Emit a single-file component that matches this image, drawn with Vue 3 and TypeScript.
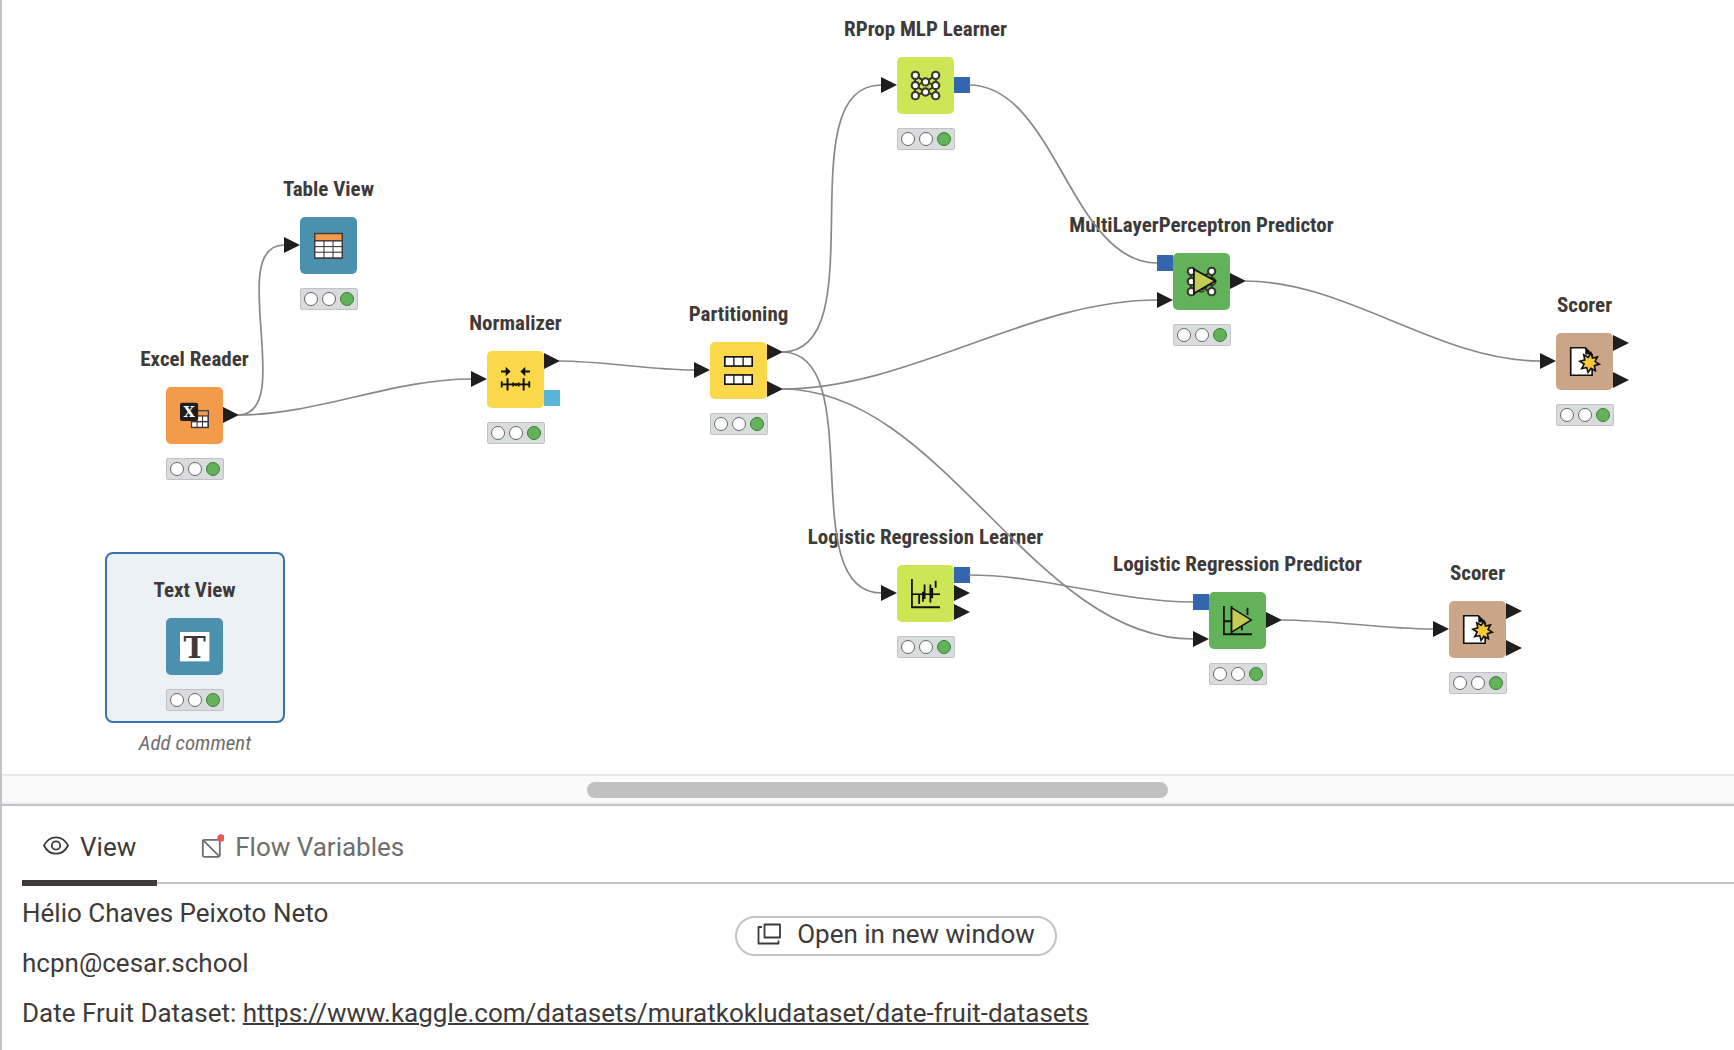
<script setup lang="ts">
import { ref } from 'vue'

type PortKind = 'data' | 'model' | 'prep'
type IconName =
  | 'excel' | 'table' | 'text' | 'normalizer' | 'partition'
  | 'network' | 'networkPredictor' | 'scorer' | 'regression' | 'regressionPredictor'

interface Port { y: number; kind: PortKind }
interface WorkflowNode {
  id: string
  label: string
  x: number
  y: number
  color: string
  icon: IconName
  inputs: Port[]
  outputs: Port[]
}
interface Connection { from: string; out: number; to: string; in: number }

const TILE = 57
const PORT = 16
const LABEL = 40

const orange = '#f39b4a'
const blue = '#4b91ae'
const yellow = '#fad84a'
const lime = '#cde656'
const green = '#61b259'
const tan = '#cba588'

// Port heights on a tile
const top = 10
const mid = 28
const low = 47

const nodes: WorkflowNode[] = [
  { id: 'excel', label: 'Excel Reader', x: 166, y: 387, color: orange, icon: 'excel', inputs: [], outputs: [{ y: mid, kind: 'data' }] },
  { id: 'table', label: 'Table View', x: 300, y: 217, color: blue, icon: 'table', inputs: [{ y: mid, kind: 'data' }], outputs: [] },
  { id: 'norm', label: 'Normalizer', x: 487, y: 351, color: yellow, icon: 'normalizer', inputs: [{ y: mid, kind: 'data' }], outputs: [{ y: top, kind: 'data' }, { y: low, kind: 'prep' }] },
  { id: 'part', label: 'Partitioning', x: 710, y: 342, color: yellow, icon: 'partition', inputs: [{ y: mid, kind: 'data' }], outputs: [{ y: top, kind: 'data' }, { y: low, kind: 'data' }] },
  { id: 'rprop', label: 'RProp MLP Learner', x: 897, y: 57, color: lime, icon: 'network', inputs: [{ y: mid, kind: 'data' }], outputs: [{ y: mid, kind: 'model' }] },
  { id: 'mlp', label: 'MultiLayerPerceptron Predictor', x: 1173, y: 253, color: green, icon: 'networkPredictor', inputs: [{ y: top, kind: 'model' }, { y: low, kind: 'data' }], outputs: [{ y: mid, kind: 'data' }] },
  { id: 'scorer1', label: 'Scorer', x: 1556, y: 333, color: tan, icon: 'scorer', inputs: [{ y: mid, kind: 'data' }], outputs: [{ y: top, kind: 'data' }, { y: low, kind: 'data' }] },
  { id: 'logl', label: 'Logistic Regression Learner', x: 897, y: 565, color: lime, icon: 'regression', inputs: [{ y: mid, kind: 'data' }], outputs: [{ y: top, kind: 'model' }, { y: mid, kind: 'data' }, { y: low, kind: 'data' }] },
  { id: 'logp', label: 'Logistic Regression Predictor', x: 1209, y: 592, color: green, icon: 'regressionPredictor', inputs: [{ y: top, kind: 'model' }, { y: low, kind: 'data' }], outputs: [{ y: mid, kind: 'data' }] },
  { id: 'scorer2', label: 'Scorer', x: 1449, y: 601, color: tan, icon: 'scorer', inputs: [{ y: mid, kind: 'data' }], outputs: [{ y: top, kind: 'data' }, { y: low, kind: 'data' }] },
  { id: 'text', label: 'Text View', x: 166, y: 618, color: blue, icon: 'text', inputs: [], outputs: [] }
]

const connections: Connection[] = [
  { from: 'excel', out: 0, to: 'table', in: 0 },
  { from: 'excel', out: 0, to: 'norm', in: 0 },
  { from: 'norm', out: 0, to: 'part', in: 0 },
  { from: 'part', out: 0, to: 'rprop', in: 0 },
  { from: 'part', out: 0, to: 'logl', in: 0 },
  { from: 'part', out: 1, to: 'mlp', in: 1 },
  { from: 'part', out: 1, to: 'logp', in: 1 },
  { from: 'rprop', out: 0, to: 'mlp', in: 0 },
  { from: 'mlp', out: 0, to: 'scorer1', in: 0 },
  { from: 'logl', out: 0, to: 'logp', in: 0 },
  { from: 'logp', out: 0, to: 'scorer2', in: 0 }
]

const byId = new Map(nodes.map((n) => [n.id, n]))

// Horizontal handles, each a third of the distance between the two ports
function connectionPath(c: Connection): string {
  const a = byId.get(c.from)!
  const b = byId.get(c.to)!
  const x1 = a.x + TILE + PORT - 1
  const y1 = a.y + a.outputs[c.out].y
  const x2 = b.x - PORT
  const y2 = b.y + b.inputs[c.in].y
  const bend = Math.round(Math.hypot(x2 - x1, y2 - y1) / 3)
  return `M${x1},${y1} C${x1 + bend},${y1} ${x2 - bend},${y2} ${x2},${y2}`
}

const paths = connections.map(connectionPath)

function triangle(x: number, y: number): string {
  return `${x},${y - 8} ${x + 16},${y} ${x},${y + 8}`
}

const portColor: Record<PortKind, string> = { data: '#1e1e1e', model: '#3366ac', prep: '#5ab4d8' }

const starPoints = Array.from({ length: 16 }, (_, i) => {
  const r = i % 2 === 0 ? 5.4 : 3.1
  const a = (i * Math.PI) / 8 + 0.15
  return `${(10.8 + r * Math.cos(a)).toFixed(2)},${(8.7 + r * Math.sin(a)).toFixed(2)}`
}).join(' ')

const activeTab = ref<'view' | 'variables'>('view')
</script>

<template>
  <main class="workspace">
    <section class="canvas" aria-label="Workflow">
      <div class="selection">
        <span class="add-comment">Add comment</span>
      </div>

      <div
        v-for="n in nodes"
        :key="n.id"
        class="node"
        :style="{ left: n.x + 'px', top: n.y - LABEL + 'px' }"
      >
        <span class="label">{{ n.label }}</span>
        <svg class="tile" viewBox="0 0 57 57" aria-hidden="true">
          <rect width="57" height="57" rx="5" :fill="n.color" />
          <template v-for="(p, i) in n.inputs" :key="'i' + i">
            <polygon v-if="p.kind === 'data'" :points="triangle(-16, p.y)" :fill="portColor.data" />
            <rect v-else x="-16" :y="p.y - 8" width="16" height="16" :fill="portColor[p.kind]" />
          </template>
          <template v-for="(p, i) in n.outputs" :key="'o' + i">
            <polygon v-if="p.kind === 'data'" :points="triangle(57, p.y)" :fill="portColor.data" />
            <rect v-else x="57" :y="p.y - 8" width="16" height="16" :fill="portColor[p.kind]" />
          </template>

          <svg x="14" y="14" width="29" height="29" viewBox="0 0 16 16" overflow="visible">
            <g v-if="n.icon === 'excel'">
              <rect x="6" y="5" width="10" height="10" fill="#3e3a39" />
              <rect x="6.7" y="5.7" width="8.6" height="2.2" fill="#f39b4a" />
              <g fill="#fff">
                <rect v-for="k in 6" :key="k" :x="6.7 + ((k - 1) % 3) * 3" :y="k < 4 ? 8.6 : 11.8" width="2.4" height="2.4" />
              </g>
              <rect x="0" y="1" width="10" height="10" rx="1.2" fill="#1e1e1e" />
              <text x="5" y="8.9" text-anchor="middle" font-family="DejaVu Serif, serif" font-weight="700" font-size="8" fill="#fff">X</text>
            </g>

            <g v-else-if="n.icon === 'table'">
              <rect x="0" y="1" width="16" height="14.4" fill="#3e3a39" />
              <rect x="0.8" y="1.8" width="14.4" height="3.2" fill="#f39b4a" />
              <g fill="#fff">
                <rect v-for="k in 9" :key="k" :x="0.8 + ((k - 1) % 3) * 5" :y="5.8 + Math.floor((k - 1) / 3) * 3.1" width="4.4" height="2.5" />
              </g>
            </g>

            <g v-else-if="n.icon === 'text'">
              <rect width="16.2" height="16.2" fill="#fff" />
              <text x="8.1" y="14.2" text-anchor="middle" font-family="DejaVu Serif, serif" font-weight="700" font-size="16.5" fill="#3e3a39">T</text>
            </g>

            <g v-else-if="n.icon === 'normalizer'" fill="none" stroke="#111">
              <path d="M0 3.6h3M16 3.6h-3" stroke-width="1" />
              <path d="M2.6 1v5.2l2.7-2.6zM13.4 1v5.2l-2.7-2.6z" fill="#111" stroke="none" />
              <path d="M0 10.7h16" stroke-width="1" />
              <path d="M.4 9v3.4M15.6 9v3.4M6.7 9.6v2.2M8.2 10v1.6M9.7 9.6v2.2" stroke-width="1" />
              <path d="M3.6 7.3v6.7M12.5 7.3v6.7" stroke-width="1.1" />
            </g>

            <g v-else-if="n.icon === 'partition'">
              <template v-for="r in [0, 10]" :key="r">
                <rect x="0" :y="r" width="16" height="6" fill="#111" />
                <rect x="0.9" :y="r + 0.9" width="4.2" height="4.2" fill="#fff" />
                <rect x="5.8" :y="r + 0.9" width="4.4" height="4.2" fill="#fff" />
                <rect x="10.9" :y="r + 0.9" width="4.2" height="4.2" fill="#fff" />
              </template>
            </g>

            <g v-else-if="n.icon === 'network' || n.icon === 'networkPredictor'">
              <path d="M2.2 2.4L8 6l5.7-3.6M2.2 8L8 6l5.7 2M2.2 8L8 11.6 13.7 8M2.2 13.6L8 11.6l5.7 2M2.2 2.4v11.2M13.7 2.4v11.2" stroke="#2b2b20" stroke-width="1" fill="none" />
              <g fill="#fff" stroke="#3a3830" stroke-width="1.2">
                <circle v-for="k in 3" :key="'l' + k" cx="2.4" :cy="2.4 + (k - 1) * 5.6" r="2" />
                <circle v-for="k in 3" :key="'r' + k" cx="13.6" :cy="2.4 + (k - 1) * 5.6" r="2" />
                <circle cx="8" cy="6" r="2" />
                <circle cx="8" cy="11.6" r="2" />
              </g>
              <g v-if="n.icon === 'networkPredictor'">
                <path d="M6 6h4v7H6z" fill="#61b259" />
                <path d="M8 12.600l3-1.600" stroke="#2b2b20" stroke-width="1" />
                <path d="M3.800 1.200L15.600 7.700 3.800 14.600z" fill="#c3cd54" stroke="#111" stroke-width="1" />
              </g>
            </g>

            <g v-else-if="n.icon === 'scorer'">
              <path d="M.4.4h8l3.8 3.8v11.4H.4z" fill="#fff" stroke="#111" stroke-width="0.9" />
              <path d="M8.4.2v4h4z" fill="#111" />
              <polygon :points="starPoints" fill="#f7c83c" stroke="#111" stroke-width="0.9" />
            </g>

            <g v-else-if="n.icon === 'regression'" fill="none" stroke="#111">
              <path d="M.5 0v15.6H16" stroke-width="1" />
              <path d="M.5 8.4H16" stroke-width="0.9" />
              <path d="M4.5 8.4v5.4M6.6 7v5.6M7.5 3v8M10.7 3v10M11.7 5v5.6M13.6 1v3.8" stroke-width="1" />
            </g>

            <g v-else>
              <path d="M.5 0v15.6H16M.5 8.4h4.2M13.5 1v4M10.4 11v2.4M4.7 0v15" fill="none" stroke="#111" stroke-width="1" />
              <path d="M4.8 1L15.6 7.7 4.8 14.4z" fill="#c3cd54" stroke="#111" stroke-width="0.8" />
            </g>
          </svg>
        </svg>
        <span class="status" role="img" aria-label="Executed">
          <i class="lamp"></i><i class="lamp"></i><i class="lamp on"></i>
        </span>
      </div>

      <svg class="connections" aria-hidden="true">
        <path v-for="(d, i) in paths" :key="i" :d="d" />
      </svg>
    </section>

    <div class="scroll-track"><div class="scroll-thumb"></div></div>

    <section class="panel">
      <div class="tabs" role="tablist">
        <button type="button" role="tab" class="tab" :class="{ active: activeTab === 'view' }" :aria-selected="activeTab === 'view'" @click="activeTab = 'view'">
          <svg class="tab-icon" viewBox="0 0 26 26" fill="none" stroke="currentColor" stroke-width="1.8" aria-hidden="true">
            <path d="M1 11.5C3.6 6.2 8 3.3 13 3.3s9.4 2.9 12 8.2c-2.6 5.3-7 8.2-12 8.2S3.600 16.800 1 11.500z" stroke-linejoin="round" />
            <circle cx="13" cy="11.5" r="4.2" />
          </svg>
          <span>View</span>
        </button>
        <button type="button" role="tab" class="tab" :class="{ active: activeTab === 'variables' }" :aria-selected="activeTab === 'variables'" @click="activeTab = 'variables'">
          <svg class="tab-icon" viewBox="0 0 26 26" fill="none" stroke="currentColor" stroke-width="1.8" aria-hidden="true">
            <rect x="4.8" y="5.8" width="17" height="17" rx="1.5" />
            <path d="M5.3 6.3l16 16" />
            <circle cx="23" cy="4" r="3.7" fill="#ed5a55" stroke="none" />
          </svg>
          <span>Flow Variables</span>
        </button>
      </div>

      <div class="view">
        <div class="text-content">
          <p>Hélio Chaves Peixoto Neto</p>
          <p>hcpn@cesar.school</p>
          <p>Date Fruit Dataset: <a href="https://www.kaggle.com/datasets/muratkokludataset/date-fruit-datasets">https://www.kaggle.com/datasets/muratkokludataset/date-fruit-datasets</a></p>
        </div>
        <button type="button" class="open-button">
          <svg width="24" height="22" viewBox="0 0 24 22" fill="none" stroke="currentColor" stroke-width="1.8" stroke-linejoin="round" aria-hidden="true">
            <rect x="7.5" y="1.5" width="15.500" height="13" />
            <path d="M5 4H1.5v16.500H21.500V17.500" />
          </svg>
          <span>Open in new window</span>
        </button>
      </div>
    </section>
  </main>
</template>

<style>
body {
  margin: 0;
  background: #fff;
}
</style>

<style scoped>
.workspace {
  box-sizing: border-box;
  display: flex;
  flex-direction: column;
  min-height: 100vh;
  border-left: 2px solid #bfc4c9;
  background: #fff;
  color: #3e3a39;
  font-family: Roboto, "Liberation Sans", sans-serif;
  overflow: hidden;
}
.canvas {
  position: relative;
  flex: 1;
  min-height: 760px;
  margin-left: -2px;
  font-family: "Roboto Condensed", "Liberation Sans Narrow", Roboto, sans-serif;
  font-size: 21px;
  line-height: 24px;
}
.connections {
  position: absolute;
  inset: 0;
  width: 100%;
  height: 100%;
  fill: none;
  stroke: #888;
  stroke-width: 1.7;
  pointer-events: none;
}
.node {
  position: absolute;
  display: flex;
  flex-direction: column;
  align-items: center;
  width: 57px;
}
.label {
  margin-bottom: 16px;
  font-weight: 700;
  white-space: nowrap;
}
.tile {
  display: block;
  width: 57px;
  height: 57px;
  overflow: visible;
}
.status {
  box-sizing: border-box;
  display: flex;
  align-items: center;
  justify-content: center;
  gap: 4px;
  width: 58px;
  height: 22px;
  margin-top: 14px;
  border: 1px solid #c0c3c5;
  border-radius: 2px;
  background: #d8dcdd;
}
.lamp {
  box-sizing: border-box;
  width: 14px;
  height: 14px;
  border: 1px solid #666;
  border-radius: 50%;
  background: #fff;
}
.lamp.on {
  border-color: #3c7d37;
  background: #61b259;
}
.selection {
  position: absolute;
  left: 105px;
  top: 552px;
  box-sizing: border-box;
  display: flex;
  justify-content: center;
  width: 180px;
  height: 171px;
  border: 2px solid #3b72ae;
  border-radius: 8px;
  background: #ecf1f6;
}
.add-comment {
  margin-top: 177px;
  height: 24px;
  color: #6e6e6e;
  font-style: italic;
  white-space: nowrap;
}
.scroll-track {
  box-sizing: border-box;
  height: 30px;
  padding: 6px 0;
  border-top: 2px solid #e8e8e8;
  border-bottom: 2px solid #ededed;
  background: #fafafa;
}
.scroll-thumb {
  width: 33.5%;
  height: 16px;
  margin-left: 33.8%;
  border-radius: 8px;
  background: #c1c1c1;
}
.panel {
  display: flex;
  flex-direction: column;
  height: 244px;
  padding-left: 20px;
  border-top: 2px solid #bfc4c9;
  font-size: 26px;
}
.tabs {
  display: flex;
  gap: 20px;
  height: 76px;
  border-bottom: 2px solid #bfc4c9;
}
.tab {
  box-sizing: border-box;
  display: flex;
  align-items: center;
  gap: 11px;
  height: 80px;
  padding: 7px 21px 0;
  border: 0;
  border-bottom: 6px solid transparent;
  background: none;
  color: #6e6e6e;
  font: inherit;
  line-height: 30px;
}
.tab.active {
  border-bottom-color: #3e3a39;
  color: #3e3a39;
}
.tab-icon {
  width: 26px;
  height: 26px;
}
.view {
  display: grid;
  padding-top: 14px;
}
.text-content,
.open-button {
  grid-area: 1 / 1;
}
.text-content p {
  margin: 0 0 20px;
  line-height: 30px;
}
.text-content a {
  color: inherit;
  text-decoration-thickness: 2px;
}
.open-button {
  box-sizing: border-box;
  display: flex;
  align-items: center;
  gap: 16px;
  align-self: start;
  justify-self: center;
  height: 40px;
  margin: 18px 0 0 36px;
  padding: 0 20px 4px;
  border: 2px solid #bfc4c9;
  border-radius: 20px;
  background: #fff;
  color: #3e3a39;
  font: inherit;
  line-height: 30px;
}
</style>
